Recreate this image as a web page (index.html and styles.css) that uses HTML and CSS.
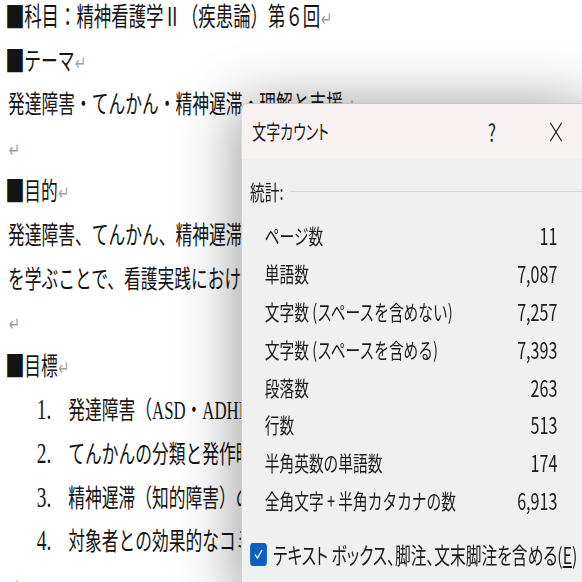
FILE: index.html
```html
<!DOCTYPE html>
<html lang="ja">
<head>
  <meta charset="UTF-8" />
  <title>文字カウント</title>
  <link rel="stylesheet" href="styles.css">
</head>
<body>

  <div class="doc">
    <p class="line head"><span class="sq">■</span>科目：精神看護学Ⅱ（疾患論）第６回<span class="mark">↵</span></p>
    <p class="line"><span class="sq">■</span>テーマ<span class="mark">↵</span></p>
    <p class="line">発達障害・てんかん・精神遅滞・理解と支援<span class="mark">↵</span></p>
    <p class="line"><span class="mark">↵</span></p>
    <p class="line"><span class="sq">■</span>目的<span class="mark">↵</span></p>
    <p class="line">発達障害、てんかん、精神遅滞の特徴と支援方法</p>
    <p class="line">を学ぶことで、看護実践における基礎的な理解を深める。<span class="mark">↵</span></p>
    <p class="line"><span class="mark">↵</span></p>
    <p class="line"><span class="sq">■</span>目標<span class="mark">↵</span></p>
    <ol class="goals">
      <li><span class="num">1.</span>発達障害（ASD・ADHD等）の特徴を理解する</li>
      <li><span class="num">2.</span>てんかんの分類と発作時の対応を理解する</li>
      <li><span class="num">3.</span>精神遅滞（知的障害）の特徴を理解する</li>
      <li><span class="num">4.</span>対象者との効果的なコミュニケーションを学ぶ</li>
    </ol>
    <p class="line"><span class="mark">↵</span></p>
  </div>

  <div class="dialog">
    <div class="titlebar">
      <span class="title">文字カウント</span>
      <span class="help">?</span>
      <svg class="close" width="22" height="20" viewBox="0 0 22 20">
        <path d="M3 1 L19 19 M19 1 L3 19" stroke="#1a1a1a" stroke-width="1.4" fill="none" />
      </svg>
    </div>
    <div class="content">
      <div class="group">
        <span>統計:</span>
        <span class="rule"></span>
      </div>
      <div class="stats">
        <span>ページ数</span><span class="val">11</span>
        <span>単語数</span><span class="val">7,087</span>
        <span>文字数 (スペースを含めない)</span><span class="val">7,257</span>
        <span>文字数 (スペースを含める)</span><span class="val">7,393</span>
        <span>段落数</span><span class="val">263</span>
        <span>行数</span><span class="val">513</span>
        <span>半角英数の単語数</span><span class="val">174</span>
        <span>全角文字 + 半角カタカナの数</span><span class="val">6,913</span>
      </div>
      <label class="check">
        <span class="box">
          <svg width="14" height="12" viewBox="0 0 14 12">
            <path d="M2 6.5 L5.5 10 L12 2" stroke="#fff" stroke-width="1.7" fill="none" />
          </svg>
        </span>
        <span class="check-text">テキスト ボックス、脚注、文末脚注を含める(<u>E</u>)</span>
      </label>
    </div>
  </div>

</body>
</html>
```

FILE: styles.css
```css
html, body {
  margin: 0;
  height: 100%;
  overflow: hidden;
  background: #fff;
}

.doc {
  width: 869px;
  margin-top: -4px;
  padding-left: 12px;
  font-family: "Liberation Serif", "Noto Sans CJK JP", serif;
  font-size: 25px;
  color: #141414;
  transform: scaleX(0.67);
  transform-origin: left top;
}

.line {
  margin: 0;
  line-height: 43.6px;
  height: 43.6px;
  white-space: nowrap;
}

.head {
  font-size: 26px;
}

.sq {
  font-family: "Noto Sans CJK JP", sans-serif;
  font-size: 29px;
  line-height: 1;
  vertical-align: -2px;
  margin-left: -4px;
  letter-spacing: -1px;
}

.mark {
  font-family: "DejaVu Sans", sans-serif;
  font-size: 20px;
  color: #a0a0a0;
  margin-left: 1px;
}

.goals {
  list-style: none;
  margin: 0;
  padding: 0;
}

.goals li {
  line-height: 43.6px;
  height: 43.6px;
  white-space: nowrap;
}

.num {
  display: inline-block;
  margin-left: 43px;
  width: 47px;
  font-size: 29px;
}

.dialog {
  position: absolute;
  left: 241px;
  top: 103px;
  width: 500px;
  height: 500px;
  background: #f0f0f0;
  border: 1px solid #c4c4c4;
  border-radius: 8px 0 0 0;
  box-shadow: -6px 0 70px rgba(0, 0, 0, 0.38);
  font-family: "Noto Sans CJK JP", sans-serif;
  font-size: 21px;
  color: #1a1a1a;
  transform: scaleX(0.7);
  transform-origin: left top;
}

.titlebar {
  display: flex;
  align-items: center;
  height: 55px;
  padding-left: 15px;
  background: #f8f2f2;
  border-radius: 8px 0 0 0;
}

.title {
  font-size: 20px;
  font-feature-settings: "palt";
  width: 337px;
}

.help {
  font-size: 24px;
  width: 86px;
}

.content {
  padding: 20px 0 0 12px;
}

.group {
  display: flex;
  align-items: center;
  height: 24px;
  line-height: 24px;
}

.rule {
  flex: 1;
  height: 1px;
  margin-left: 8px;
  background: #d6d6d6;
}

.stats {
  display: grid;
  grid-template-columns: 1fr auto;
  width: 418px;
  margin: 14px 0 0 21px;
}

.stats span {
  line-height: 37.9px;
  height: 37.9px;
}

.val {
  text-align: right;
  font-size: 23px;
}

.check {
  display: flex;
  align-items: center;
  gap: 9px;
  margin-top: 22px;
  height: 24px;
  white-space: nowrap;
}

.check-text {
  font-size: 22.5px;
  font-feature-settings: "palt";
}

.box {
  display: flex;
  align-items: center;
  justify-content: center;
  width: 24px;
  height: 23px;
  background: #0a5fc0;
  border-radius: 4px;
}
```
